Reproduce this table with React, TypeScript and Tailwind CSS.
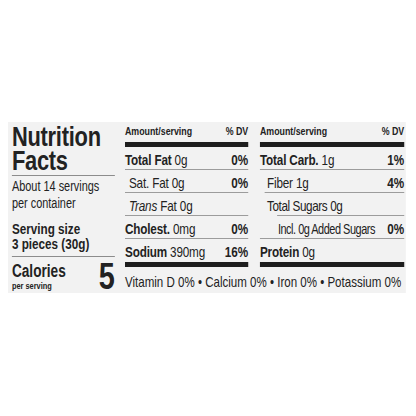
const font = {
  fontFamily: '"Liberation Sans", Arial, sans-serif',
};

type Row = {
  label: string;
  amount: string;
  dv?: string;
  bold?: boolean;
  italic?: boolean;
  indent?: string;
  line?: string;
  tight?: string;
};

const fatRows: Row[] = [
  { label: "Total Fat", amount: "0g", dv: "0%", bold: true },
  { label: "Sat. Fat", amount: "0g", dv: "0%", indent: "pl-[5px]" },
  { label: "Trans", amount: "Fat 0g", italic: true, indent: "pl-[5px]" },
  { label: "Cholest.", amount: "0mg", dv: "0%", bold: true },
  { label: "Sodium", amount: "390mg", dv: "16%", bold: true, line: "none" },
];

const carbRows: Row[] = [
  { label: "Total Carb.", amount: "1g", dv: "1%", bold: true },
  { label: "Fiber", amount: "1g", dv: "4%", indent: "pl-[9px]", line: "ml-[6px]" },
  { label: "Total Sugars", amount: "0g", indent: "pl-[9px]", line: "ml-[22px]", tight: "tracking-[-0.5px]" },
  {
    label: "Incl. 0g Added Sugars",
    amount: "",
    dv: "0%",
    indent: "pl-[23px]",
    tight: "tracking-[-0.6px] text-[14px]",
  },
  { label: "Protein", amount: "0g", bold: true, line: "none" },
];

const FactRow = ({ row }: { row: Row }) => (
  <div className="flex flex-col">
    <div
      className={`flex h-[22px] items-start justify-between pt-[5px] text-[15px] leading-[16px] ${row.indent ?? ""}`}
    >
      <span className={`whitespace-nowrap ${row.tight ?? "tracking-[-0.2px]"}`}>
        {row.italic ? <i>{row.label}</i> : row.bold ? <b>{row.label}</b> : row.label}
        {row.amount && ` ${row.amount}`}
      </span>
      {row.dv && <b>{row.dv}</b>}
    </div>
    {row.line !== "none" && <div className={`h-px bg-[#9c9c9c] ${row.line ?? ""}`} />}
  </div>
);

const Column = ({ rows, width }: { rows: Row[]; width: string }) => (
  <div className={`flex flex-col ${width}`}>
    <div className="flex h-[11px] justify-between text-[11.3px] font-bold leading-[11px]">
      <span>Amount/serving</span>
      <span>% DV</span>
    </div>
    <div className="mt-[5px] h-[5px] bg-[#1e1e1e]" />
    <div className="flex flex-col">
      {rows.map((row) => (
        <FactRow key={row.label} row={row} />
      ))}
    </div>
    <div className="mt-[1px] h-[5px] bg-[#1e1e1e]" />
  </div>
);

export default function App() {
  return (
    <div className="h-[416px] w-[416px] overflow-hidden bg-white pl-[8px] pt-[122px] text-[#222]" style={font}>
      <div className="flex h-[171px] w-[510px] origin-left scale-x-[0.78] bg-[#f2f2f2] pl-[5px] pt-[3px]">
        <div className="flex w-[132px] flex-col">
          <div className="flex flex-col text-[28px] font-bold leading-[24px] tracking-[-0.3px]">
            <span>Nutrition</span>
            <span>Facts</span>
          </div>
          <div className="mt-[2px] h-px bg-[#8c8c8c]" />
          <div className="mt-[2px] flex flex-col text-[14px] leading-[17px]">
            <span>About 14 servings</span>
            <span>per container</span>
          </div>
          <div className="mt-[9px] flex flex-col text-[15px] font-bold leading-[15px]">
            <span>Serving size</span>
            <span>3 pieces (30g)</span>
          </div>
          <div className="mt-[5px] h-px bg-[#8c8c8c]" />
          <div className="mt-[5px] flex items-start justify-between">
            <div className="flex flex-col">
              <span className="text-[17.5px] font-bold leading-[18px]">Calories</span>
              <span className="text-[9.5px] font-bold leading-[11px]">per serving</span>
            </div>
            <span className="text-[37px] font-bold leading-[30px]">5</span>
          </div>
        </div>
        <div className="ml-[13px] mt-[1px] flex flex-col">
          <div className="flex gap-[15px]">
            <Column rows={fatRows} width="w-[158px]" />
            <Column rows={carbRows} width="w-[185px]" />
          </div>
          <div className="mt-[8px] whitespace-nowrap text-[14.8px] leading-[15px]">
            Vitamin D 0% • Calcium 0% • Iron 0% • Potassium 0%
          </div>
        </div>
      </div>
    </div>
  );
}
